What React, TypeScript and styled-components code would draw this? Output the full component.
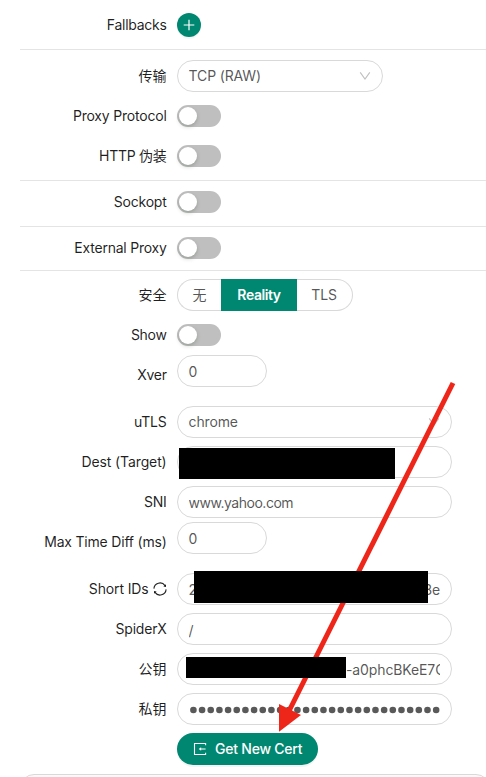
import React from "react";
import styled, { createGlobalStyle } from "styled-components";

const GlobalStyle = createGlobalStyle`
  * { box-sizing: border-box; }
  body {
    margin: 0;
    background: #fff;
    overflow: hidden;
    font-family: Inter, "Noto Sans CJK SC", sans-serif;
    font-size: 14px;
    line-height: 20px;
    color: rgba(0, 0, 0, 0.88);
  }
`;

const Page = styled.main`
  position: relative;
  width: 486px;
  height: 777px;
  padding-top: 5px;
  overflow: hidden;
`;

const Row = styled.div<{ $before?: number }>`
  display: grid;
  grid-template-columns: 167px 1fr;
  column-gap: 10px;
  align-items: center;
  height: 40px;
  margin-top: ${(p) => p.$before ?? 0}px;
`;

const Label = styled.label<{ $tracking?: number }>`
  display: flex;
  justify-content: flex-end;
  align-items: center;
  gap: 4px;
  padding-right: 0.4px;
  white-space: nowrap;
  letter-spacing: ${(p) => p.$tracking ?? -0.2}px;
`;

const Control = styled.div<{ $lift?: number }>`
  display: flex;
  align-items: center;
  padding-bottom: ${(p) => p.$lift ?? 0}px;
`;

const Divider = styled.hr<{ $top: number; $bottom: number }>`
  height: 1px;
  border: 0;
  background: #e4e4e4;
  margin: ${(p) => p.$top}px 0 ${(p) => p.$bottom}px 20px;
`;

const AddButton = styled.button`
  display: grid;
  place-items: center;
  width: 24px;
  height: 24px;
  padding: 0;
  border: 0;
  border-radius: 50%;
  color: #fff;
  background: #008771;
  box-shadow: 0 2px 0 rgba(0, 0, 0, 0.035);
`;

const Switch = styled.button`
  display: flex;
  align-items: center;
  width: 44px;
  height: 22px;
  padding: 0 2px;
  border: 0;
  border-radius: 11px;
  background: #bfbfbf;
`;

const Knob = styled.span`
  width: 18px;
  height: 18px;
  border-radius: 50%;
  background: #fff;
  box-shadow: 0 2px 4px rgba(0, 35, 11, 0.2);
`;

const Field = styled.div<{ $width: number; $tracking?: number }>`
  position: relative;
  display: flex;
  align-items: center;
  justify-content: space-between;
  width: ${(p) => p.$width}px;
  height: 32px;
  padding: 0 11px 0 10.6px;
  border: 1px solid #d9d9d9;
  border-radius: 16px;
  background: #fff;
  color: rgba(0, 0, 0, 0.68);
  white-space: nowrap;
  letter-spacing: ${(p) => p.$tracking ?? -0.15}px;
`;

const Value = styled.span<{ $drop?: number }>`
  display: flex;
  overflow: hidden;
  flex: 1;
  padding-top: ${(p) => p.$drop ?? 0}px;
`;

const TailValue = styled(Value)`
  justify-content: flex-end;
`;

const KeyTail = styled.span`
  width: 94px;
  overflow: hidden;
`;

const Redaction = styled.span<{ $x: number; $y: number; $w: number; $h: number }>`
  position: absolute;
  z-index: 3;
  left: ${(p) => p.$x}px;
  top: ${(p) => p.$y}px;
  width: ${(p) => p.$w}px;
  height: ${(p) => p.$h}px;
  background: #000;
`;

const RadioGroup = styled.div`
  display: flex;
  height: 32px;
`;

const Radio = styled.button<{ $width: number; $side?: "left" | "right"; $active?: boolean }>`
  width: ${(p) => p.$width}px;
  padding: 0 ${(p) => (p.$side === "right" ? 1 : 0)}px 0 0;
  font: inherit;
  font-weight: ${(p) => (p.$active ? 600 : 400)};
  letter-spacing: ${(p) => (p.$active ? -0.42 : -0.2)}px;
  color: ${(p) => (p.$active ? "#fff" : "rgba(0,0,0,0.68)")};
  background: ${(p) => (p.$active ? "#008771" : "#fff")};
  border: 1px solid ${(p) => (p.$active ? "#008771" : "#d9d9d9")};
  border-left-width: ${(p) => (p.$side === "right" ? 0 : 1)}px;
  border-right-width: ${(p) => (p.$side === "left" ? 0 : 1)}px;
  border-radius: ${(p) =>
    p.$side === "left" ? "16px 0 0 16px" : p.$side === "right" ? "0 16px 16px 0" : "0"};
`;

const PrimaryButton = styled.button`
  display: flex;
  align-items: center;
  gap: 8px;
  width: 141px;
  height: 32px;
  padding: 0 0 0 16px;
  border: 0;
  border-radius: 16px;
  background: #008771;
  color: #fff;
  font: inherit;
  font-weight: 500;
  white-space: nowrap;
  letter-spacing: -0.23px;
  box-shadow: 0 2px 0 rgba(0, 0, 0, 0.045);
`;

const NextPanel = styled.section`
  height: 40px;
  margin: 5px 0 0 20px;
  width: 470px;
  border: 1px solid #d9d9d9;
  border-radius: 14px;
  background: #fafafa;
`;

const ArrowOverlay = styled.svg`
  position: absolute;
  z-index: 2;
  inset: 0;
  pointer-events: none;
`;

const PlusIcon = () => (
  <svg width="14" height="14" viewBox="0 0 14 14" stroke="currentColor" strokeWidth="1.2">
    <path d="M7 1.7v10.6M1.7 7h10.6" />
  </svg>
);

const DownIcon = () => (
  <svg width="12" height="12" viewBox="0 0 12 12" fill="none" stroke="#bfbfbf" strokeWidth="1.1">
    <path d="M1.2 2.4 6 9l4.8-6.6" />
  </svg>
);

const SyncIcon = () => (
  <svg width="14" height="14" viewBox="0 0 14 14">
    <g fill="none" stroke="currentColor" strokeWidth="1.1">
      <path d="M.9 6.6A6.1 6.1 0 0 1 12 3.6M13.1 7.4A6.1 6.1 0 0 1 2 10.4" />
    </g>
    <path d="M10.4 4.6 13 5.1V2.3zM3.6 9.4 1 8.9v2.8z" fill="currentColor" />
  </svg>
);

const ImportIcon = () => (
  <svg width="14" height="14" viewBox="0 0 14 14" fill="none" stroke="currentColor" strokeWidth="1.1">
    <path d="M12.6 3.3V1.5H1.5v11h11.1v-1.8M12.6 7H7.5" />
    <path d="M5.7 7 8.1 5.2v3.6z" fill="currentColor" stroke="none" />
  </svg>
);

const MaskedValue = ({ length }: { length: number }) => (
  <svg width="251" height="10" viewBox="0 0 251 10" fill="#595959" aria-label="Hidden value">
    {Array.from({ length }, (_, i) => (
      <circle key={i} cx={4.4 + i * 8.67} cy="6" r="3.3" />
    ))}
  </svg>
);

const Toggle = () => (
  <Control>
    <Switch role="switch" aria-checked="false">
      <Knob />
    </Switch>
  </Control>
);

export default function App() {
  return (
    <>
      <GlobalStyle />
      <Page>
        <Row>
          <Label $tracking={-0.27}>Fallbacks</Label>
          <Control>
            <AddButton><PlusIcon /></AddButton>
          </Control>
        </Row>
        <Divider $top={4} $bottom={6} />
        <Row>
          <Label $tracking={0}>传输</Label>
          <Control>
            <Field $width={206}>
              <Value>TCP (RAW)</Value>
              <DownIcon />
            </Field>
          </Control>
        </Row>
        <Row>
          <Label>Proxy Protocol</Label>
          <Toggle />
        </Row>
        <Row>
          <Label $tracking={-0.25}>HTTP 伪装</Label>
          <Toggle />
        </Row>
        <Divider $top={4} $bottom={1} />
        <Row>
          <Label>Sockopt</Label>
          <Toggle />
        </Row>
        <Divider $top={4} $bottom={1} />
        <Row>
          <Label $tracking={-0.23}>External Proxy</Label>
          <Toggle />
        </Row>
        <Divider $top={2} $bottom={4} />
        <Row>
          <Label $tracking={0}>安全</Label>
          <Control>
            <RadioGroup>
              <Radio $width={44} $side="left">无</Radio>
              <Radio $width={76} $active>Reality</Radio>
              <Radio $width={56} $side="right">TLS</Radio>
            </RadioGroup>
          </Control>
        </Row>
        <Row>
          <Label $tracking={-0.3}>Show</Label>
          <Toggle />
        </Row>
        <Row>
          <Label $tracking={-0.3}>Xver</Label>
          <Control $lift={8}>
            <Field $width={90}><Value $drop={1}>0</Value></Field>
          </Control>
        </Row>
        <Row $before={7}>
          <Label>uTLS</Label>
          <Control>
            <Field $width={275}>
              <Value>chrome</Value>
              <DownIcon />
            </Field>
          </Control>
        </Row>
        <Row>
          <Label $tracking={-0.12}>Dest (Target)</Label>
          <Control>
            <Field $width={275}>
              <Redaction $x={1} $y={1} $w={216} $h={31} />
            </Field>
          </Control>
        </Row>
        <Row>
          <Label>SNI</Label>
          <Control>
            <Field $width={275} $tracking={-0.48}><Value $drop={1}>www.yahoo.com</Value></Field>
          </Control>
        </Row>
        <Row>
          <Label>Max Time Diff (ms)</Label>
          <Control $lift={8}>
            <Field $width={90}><Value $drop={1}>0</Value></Field>
          </Control>
        </Row>
        <Row $before={7}>
          <Label $tracking={-0.12}>Short IDs <SyncIcon /></Label>
          <Control>
            <Field $width={275}>
              <Value $drop={2}>2</Value>
              <TailValue $drop={2}>3e</TailValue>
              <Redaction $x={16} $y={-3} $w={234} $h={32} />
            </Field>
          </Control>
        </Row>
        <Row>
          <Label>SpiderX</Label>
          <Control>
            <Field $width={275}><Value $drop={3}>/</Value></Field>
          </Control>
        </Row>
        <Row>
          <Label $tracking={0}>公钥</Label>
          <Control>
            <Field $width={275} $tracking={-0.12}>
              <TailValue $drop={2}><KeyTail>-a0phcBKeE7C</KeyTail></TailValue>
              <Redaction $x={8} $y={3} $w={160} $h={21} />
            </Field>
          </Control>
        </Row>
        <Row>
          <Label $tracking={0}>私钥</Label>
          <Control>
            <Field $width={275}>
              <MaskedValue length={29} />
            </Field>
          </Control>
        </Row>
        <Row>
          <span />
          <Control>
            <PrimaryButton><ImportIcon />Get New Cert</PrimaryButton>
          </Control>
        </Row>
        <NextPanel />
        <ArrowOverlay width="486" height="777" viewBox="0 0 486 777">
          <path d="M453 383 289 711" stroke="#ed2619" strokeWidth="5" />
          <path d="M279 704v27.8l22-16.8z" fill="#ed2619" />
        </ArrowOverlay>
      </Page>
    </>
  );
}
